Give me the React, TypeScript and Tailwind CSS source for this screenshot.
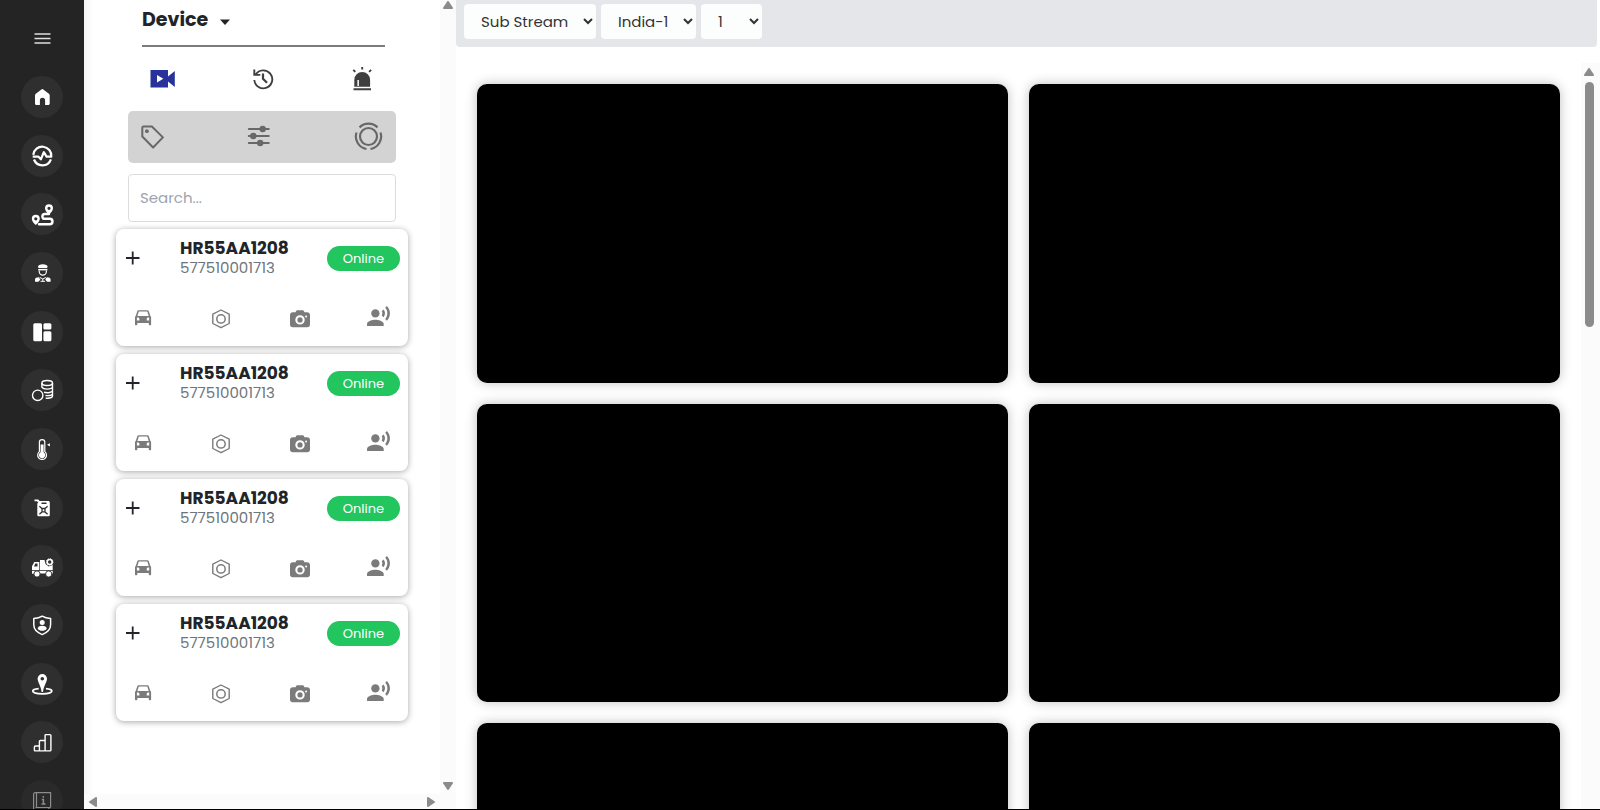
import type { ReactNode } from "react";
import { MdRecordVoiceOver } from "react-icons/md";

type IconProps = { children: ReactNode; className?: string };

function Icon({ children, className = "size-6" }: IconProps) {
  return (
    <svg viewBox="0 0 24 24" fill="none" stroke="currentColor" className={className} aria-hidden="true">
      {children}
    </svg>
  );
}

const navItems: { label: string; icon: ReactNode; muted?: boolean }[] = [
  {
    label: "Home",
    icon: (
      <path
        fill="currentColor"
        stroke="none"
        d="M11.4 4.5a1.5 1.5 0 0 1 1.9 0l5.6 4.2c.5.4.8 1 .8 1.6v8.2c0 .9-.6 1.5-1.5 1.5h-3.1v-4.6a2.6 2.6 0 0 0-5.2 0V20H6.500c-.9 0-1.500-.6-1.500-1.500v-8.200c0-.6.3-1.200.8-1.600z"
      />
    ),
  },
  {
    label: "Activity",
    icon: (
      <g strokeWidth="2.200" strokeLinejoin="round">
        <path d="M3.300 10.800A9 9 0 0 1 21.300 12.700H16.600L13.800 8.200 10.900 15.300 8.500 12.700H2.700" />
        <path d="M4 15.500A9 9 0 0 0 20.900 15.300" />
      </g>
    ),
  },
  {
    label: "Routes",
    icon: (
      <g>
        <path strokeWidth="2.400" strokeLinecap="round" d="M19 12h-4.200a2.400 2.400 0 0 0 0 4.800h5a2.700 2.700 0 0 1 0 5.400H9" />
        <path
          fill="currentColor"
          stroke="none"
          fillRule="evenodd"
          d="M19 2.200a4 4 0 0 1 4 4c0 2.600-2.200 4.600-4 6.400-1.800-1.800-4-3.800-4-6.400a4 4 0 0 1 4-4zm0 2.500a1.600 1.600 0 1 0 0 3.200 1.600 1.600 0 0 0 0-3.200zM5.800 12.700a4 4 0 0 1 4 4c0 2.600-2.200 4.600-4 6.300-1.800-1.700-4-3.700-4-6.300a4 4 0 0 1 4-4zm0 2.500a1.600 1.600 0 1 0 0 3.200 1.600 1.600 0 0 0 0-3.200z"
        />
      </g>
    ),
  },
  {
    label: "Drivers",
    icon: (
      <g>
        <path fill="currentColor" stroke="none" d="M8 5.800c0-1.600 2-2.600 4.800-2.600s4.800 1 4.800 2.600l-.6 1.300H8.600z" />
        <path fill="currentColor" stroke="none" d="M8.200 7.900h9.200v1.500H8.200z" />
        <path strokeWidth="1.200" d="M9.200 9.500v1a3.600 3.600 0 0 0 7.200 0v-1" />
        <path
          fill="currentColor"
          stroke="none"
          d="M5 20.800v-2.200c0-1.600 1.500-2.200 3.700-2.300l1.700 2.200-1.900 2.300zM20.600 20.800v-2.200c0-1.600-1.500-2.200-3.700-2.300l-1.700 2.200 1.900 2.300z"
        />
        <path strokeWidth="1" d="m9.700 16.400 3.100 1.600 3.100-1.600M12.800 18v2.300M10.500 20.300h4.600" />
      </g>
    ),
  },
  {
    label: "Dashboard",
    icon: (
      <g fill="currentColor" stroke="none">
        <rect x="3.300" y="3.300" width="8.700" height="18" rx="1.500" />
        <rect x="13.400" y="3.300" width="8" height="6.200" rx="1.500" />
        <rect x="13.400" y="11.200" width="8" height="10.100" rx="1.500" />
      </g>
    ),
  },
  {
    label: "Costs",
    icon: (
      <g strokeWidth="1.400">
        <circle cx="7.700" cy="17.300" r="5.200" />
        <ellipse cx="17.200" cy="5" rx="5.300" ry="2.500" />
        <path d="M11.900 5v4.200c.8 1.200 2.700 1.900 5.300 1.900s5-.9 5.300-2.200M22.500 5v13c-.3 1.300-2.200 2.200-4.800 2.300h-2M14 14.300c3.500.9 8.200.3 8.500-1.700M15.500 17.500c3.500.3 6.700-.4 7-1.900" />
      </g>
    ),
  },
  {
    label: "Temperature",
    icon: (
      <g>
        <path strokeWidth="1.200" d="M9.400 5.300a2.700 2.700 0 0 1 5.400 0v9.300a4.400 4.400 0 1 1-5.400 0z" />
        <path fill="currentColor" stroke="none" d="M10.600 7.500h3v7.700a3.200 3.200 0 1 1-3 0zM17 7.800l2.900-1.600v3.200z" />
      </g>
    ),
  },
  {
    label: "Fuel",
    icon: (
      <g>
        <path
          fill="currentColor"
          stroke="none"
          fillRule="evenodd"
          d="M4.500 3.500h3.800l1.400 1.500h8.500c1 0 1.600.7 1.600 1.600v12.100c0 1-.7 1.600-1.600 1.600H8.900c-1 0-1.600-.7-1.600-1.600V8.300c0-.9.3-1.500.9-2.100L7 5.200H4.500zM11.500 6.600v1.500h5V6.600z"
        />
        <path stroke="#2f2f2f" strokeWidth="1.300" d="m9.400 10.300 2.600 2.200h3l2.600-2.200M9.400 18.200l2.600-2.300h3l2.600 2.300M12 12.500v3.400M15 12.500v3.400" />
      </g>
    ),
  },
  {
    label: "Fleet",
    icon: (
      <g>
        <path fill="currentColor" stroke="none" fillRule="evenodd" d="M2 19.500v-7.200L4.300 8h5v11.500zM4 12.500h3.500V9.400H5.300z" />
        <path fill="currentColor" stroke="none" d="M10 6h4.500l1 4 3.200 2.600 4-1.600v8.500H2v-2.700h8z" />
        <circle cx="19.700" cy="8" r="2.500" strokeWidth="1.600" />
        <circle cx="19.700" cy="8" r="3.300" strokeWidth=".8" strokeDasharray="1.200 1" />
        <path stroke="#2f2f2f" strokeWidth=".8" d="M2 16.500h21" />
        <circle cx="7" cy="20" r="3.100" fill="currentColor" stroke="#2f2f2f" strokeWidth=".9" />
        <circle cx="18.700" cy="20" r="3.100" fill="currentColor" stroke="#2f2f2f" strokeWidth=".9" />
      </g>
    ),
  },
  {
    label: "Security",
    icon: (
      <g>
        <path strokeWidth="1.500" strokeLinejoin="round" d="M12.200 3.200C14.500 4.700 17.500 5.400 20.600 5.500v6.300c0 4.600-3.300 7.800-8.400 9.800-5.100-2-8.400-5.200-8.400-9.800V5.500c3.100-.1 6.100-.8 8.400-2.300z" />
        <circle cx="12.200" cy="9.500" r="2.500" fill="currentColor" stroke="none" />
        <path fill="currentColor" stroke="none" d="M7.700 15.800c0-2.100 1.900-3 4.500-3s4.500.9 4.500 3c-1 1.500-2.600 2-4.500 2s-3.500-.5-4.500-2z" />
      </g>
    ),
  },
  {
    label: "Locations",
    icon: (
      <g>
        <path
          fill="currentColor"
          stroke="none"
          fillRule="evenodd"
          d="M12.300 2a4.700 4.700 0 0 1 4.700 4.700c0 3.300-3.300 7-4 13.300h-1.400C10.900 13.700 7.600 10 7.600 6.700A4.700 4.700 0 0 1 12.300 2zm0 3a1.800 1.800 0 1 0 0 3.600 1.800 1.800 0 0 0 0-3.600z"
        />
        <path strokeWidth="1.600" d="M8.700 16.600c-3.400.3-6 1.200-6 2.500 0 1.600 4.300 2.800 9.600 2.800s9.600-1.200 9.600-2.800c0-1.300-2.600-2.200-6-2.500" />
      </g>
    ),
  },
  {
    label: "Reports",
    icon: (
      <path
        strokeWidth="1.400"
        strokeLinejoin="round"
        d="M4.400 16.900c0-.6.300-.9.900-.9h4.100v4.900H5.300c-.6 0-.9-.3-.9-.9zM9.400 11.400c0-.6.300-.9.900-.9h4.800v10.400H9.400zM15.100 5.500c0-.6.300-.9.900-.9h4c.6 0 .9.300.9.900V20c0 .6-.3.900-.9.900h-4.900z"
      />
    ),
  },
  {
    label: "Manual",
    muted: true,
    icon: (
      <g strokeWidth="1.200">
        <path d="M20.600 18.500V3.700H5.500c-1.200 0-1.900.8-1.900 2V20c0 1.200.8 2 1.900 2h15.100M20.600 18.500H5.500M6.500 3.700v14.800M19 18.500V22" />
        <path strokeWidth="1.500" d="M13.300 7v1.700M11.800 10.500h1.600v4.300M11.500 15h4" />
      </g>
    ),
  },
];

function Sidebar() {
  return (
    <nav aria-label="Main" className="w-[84px] shrink-0 overflow-hidden bg-[#242424] text-white">
      <button aria-label="Toggle menu" className="flex h-[76px] w-full items-center justify-center">
        <Icon>
          <path strokeWidth="1.700" stroke="#dedede" d="M4.500 8h16M4.500 12.500h16M4.500 17h16" />
        </Icon>
      </button>
      <ul className="flex h-[746px] flex-col items-center justify-between">
        {navItems.map((item) => (
          <li key={item.label}>
            <a
              href="#"
              aria-label={item.label}
              className={
                item.muted
                  ? "flex size-[42px] items-center justify-center rounded-full bg-[#2a2a2a] text-[#8c8c8c]"
                  : "flex size-[42px] items-center justify-center rounded-full bg-[#2f2f2f]"
              }
            >
              <Icon>{item.icon}</Icon>
            </a>
          </li>
        ))}
      </ul>
    </nav>
  );
}

function Arrow({ direction }: { direction: "up" | "down" | "left" | "right" }) {
  const turn = { up: "", down: "rotate-180", left: "-rotate-90", right: "rotate-90" }[direction];
  return (
    <svg viewBox="0 0 10 8" className={`shrink-0 ${turn}`} width="10" height="8" aria-hidden="true">
      <path fill="#8b8b8b" d="M4.200.5a1 1 0 0 1 1.600 0L9.800 6.500c.4.700.1 1.500-.7 1.500H.9C.1 8-.2 7.200.2 6.500z" />
    </svg>
  );
}

const devices = [1, 2, 3, 4].map((id) => ({ id, name: "HR55AA1208", serial: "577510001713", status: "Online" }));

function DeviceCard({ name, serial, status }: { name: string; serial: string; status: string }) {
  return (
    <li className="flex h-[117px] flex-col justify-between rounded-lg bg-white px-2 pt-2 pb-[14px] shadow-[0_1px_6px_rgba(0,0,0,0.35)]">
      <div className="flex items-center">
        <button aria-label="Expand" className="flex w-14 items-center pt-0.5">
          <svg viewBox="0 0 16 16" className="size-4" fill="none" stroke="#212529" aria-hidden="true">
            <path strokeWidth="1.800" d="M2 8h13.500M8.700 1.500v13" />
          </svg>
        </button>
        <div className="flex-1">
          <h2 className="text-[17px] leading-[22px] font-bold text-[#212529]">{name}</h2>
          <p className="text-[15px] leading-[18px] text-[#6c757d]">{serial}</p>
        </div>
        <span className="mt-[3px] w-[73px] rounded-full bg-[#22c55e] text-center text-[13px] leading-[25px] text-white">
          {status}
        </span>
      </div>
      <div className="flex items-center justify-between pr-[9px] pl-[7px] text-[#7b7b7b]">
        <button aria-label="Vehicle">
          <Icon>
            <path
              fill="currentColor"
              stroke="none"
              fillRule="evenodd"
              d="M6.300 5.200C6.500 4.500 7 4.200 7.600 4.200h8.900c.6 0 1.100.3 1.300 1l1.400 4.300.9 1.500v7.500c0 .4-.3.700-.7.700h-.9c-.4 0-.7-.3-.7-.7v-1.500H6.300v1.500c0 .4-.3.700-.7.700h-.9c-.4 0-.7-.3-.7-.7V11l.9-1.500zM7.800 5.400 6.400 9.900h11.300l-1.400-4.500zM5.900 11.600v2.800h2.500v-1.300c0-.9-.6-1.500-1.400-1.500zM18.200 11.600v2.800h-2.500v-1.300c0-.9.6-1.500 1.400-1.500z"
            />
          </Icon>
        </button>
        <button aria-label="Settings">
          <Icon>
            <path strokeWidth="1.400" strokeLinejoin="round" d="M12 4 20.200 8.200v9.300L12 21.700l-8.200-4.200V8.200z" />
            <circle cx="12" cy="12.900" r="4.200" strokeWidth="1.500" />
          </Icon>
        </button>
        <button aria-label="Snapshot">
          <Icon>
            <path
              fill="currentColor"
              stroke="none"
              fillRule="evenodd"
              d="M9.200 4.200h5.600c.5 0 .9.300 1.100.8l.6 1.300h2.700c1.700 0 2.800 1.100 2.800 2.800v9.400c0 1.700-1.100 2.800-2.800 2.800H4.800C3.100 21.300 2 20.200 2 18.500V9.100c0-1.700 1.100-2.800 2.800-2.800h2.700l.6-1.300c.2-.5.600-.8 1.100-.8zM12 9.200a4.700 4.700 0 1 0 0 9.400 4.700 4.700 0 0 0 0-9.400zm0 2.100a2.600 2.600 0 1 1 0 5.200 2.600 2.600 0 0 1 0-5.200zm6.100-1.900a1 1 0 1 0 0 2 1 1 0 0 0 0-2z"
            />
          </Icon>
        </button>
        <button aria-label="Talk" className="pb-[3px]">
          <MdRecordVoiceOver className="size-[25px]" />
        </button>
      </div>
    </li>
  );
}

function DevicePanel() {
  return (
    <aside className="grid w-[372px] shrink-0 grid-cols-[1fr_16px] grid-rows-[minmax(0,1fr)_15px] bg-[linear-gradient(to_right,#f5f5f5,#ffffff_10px)]">
      <div className="overflow-hidden px-8">
        <div className="px-3">
          <button className="mx-[14px] flex h-[47px] w-[calc(100%-25px)] items-center gap-3 border-b-2 border-[#7c7c7c] pb-[5px] text-left text-[19px] font-bold text-[#212529]">
            Device
            <svg viewBox="0 0 10 6" width="10" height="6" className="mt-1" aria-hidden="true">
              <path fill="currentColor" d="M0 .5h10L5 6z" />
            </svg>
          </button>
          <div className="flex h-16 items-center justify-between pr-[22px] pl-[21px] text-[#3f3f3f]">
            <button aria-label="Live video" className="text-[#28329a]">
              <svg viewBox="0 0 26 20" className="h-5 w-[26px]" aria-hidden="true">
                <path fill="currentColor" fillRule="evenodd" d="M1.500 1H19v6.500L25.800 2v16L19 12.500V18.500H1.500zm6.500 5v7.500L14.300 9.800z" />
              </svg>
            </button>
            <button aria-label="History">
              <Icon>
                <path strokeWidth="1.900" d="M4.700 7.500A9 9 0 1 1 3.300 13M3.300 2.500v5.400h6" />
                <path strokeWidth="2.200" d="M12 6.500v5.400l4 3.800" />
              </Icon>
            </button>
            <button aria-label="Alarms">
              <Icon>
                <path fill="currentColor" stroke="none" fillRule="evenodd" d="M4.300 19.700v-6.800a7.900 7.900 0 0 1 15.800 0v6.800zM7.400 18.900h1.500v-6H7.400z" />
                <path strokeWidth="1.900" d="M3.500 22.300h17.500M12.200 0v2.600M3.300 2.800l2 2M21.100 2.800l-2 2" />
              </Icon>
            </button>
          </div>
          <div className="flex h-[52px] items-center justify-between rounded-[5px] bg-[#d3d3d3] px-3 text-[#686868]">
            <button aria-label="Tags">
              <Icon>
                <path strokeWidth="2" strokeLinejoin="round" d="M2.300 2.800c0-.8.500-1.300 1.300-1.300h8.300L22.900 12.400 13.100 22.500 2.300 11.500z" />
                <circle cx="6.900" cy="6.200" r="1.900" fill="currentColor" stroke="none" />
              </Icon>
            </button>
            <button aria-label="Filters">
              <Icon>
                <path strokeWidth="1.900" strokeLinecap="round" d="M1.800 4h20M1.800 11h20M1.800 18h20" />
                <g fill="currentColor" stroke="none">
                  <circle cx="15.700" cy="4" r="3.200" />
                  <circle cx="6.300" cy="11" r="3.200" />
                  <circle cx="13.200" cy="18" r="3.200" />
                </g>
              </Icon>
            </button>
            <button aria-label="Status">
              <svg viewBox="0 0 30 30" className="size-[30px]" fill="none" stroke="currentColor" aria-hidden="true">
                <circle cx="14.500" cy="14.500" r="8.500" strokeWidth="2.200" />
                <path strokeWidth="2.200" d="M5.500 5.400a12.700 12.700 0 0 1 18 0M2.500 10.500a12.700 12.700 0 0 0 10 16.500M26.500 10.500a12.700 12.700 0 0 1-10 16.500" />
              </svg>
            </button>
          </div>
          <input
            type="search"
            aria-label="Search devices"
            placeholder="Search..."
            className="mt-[11px] h-12 w-full rounded-[4px] border border-[#dcdcdc] bg-white px-[11px] pb-0.5 text-[15px] text-[#212529] placeholder:text-[#9ca3af]"
          />
        </div>
        <ul className="mt-[7px] flex flex-col gap-2">
          {devices.map((device) => (
            <DeviceCard key={device.id} name={device.name} serial={device.serial} status={device.status} />
          ))}
        </ul>
      </div>
      <div className="flex flex-col items-center justify-between bg-[#fbfbfb] pt-px pb-1">
        <Arrow direction="up" />
        <Arrow direction="down" />
      </div>
      <div className="flex items-center justify-between bg-[#fbfbfb] px-1">
        <Arrow direction="left" />
        <Arrow direction="right" />
      </div>
      <div className="bg-[#fbfbfb]" />
    </aside>
  );
}

function LiveView() {
  const selectStyle = "h-[35px] rounded-[4px] bg-[#fcfefd] pl-[13px] text-[15px] text-[#333]";
  return (
    <main className="flex min-w-0 flex-1 flex-col">
      <header className="mr-[3px] flex h-[47px] shrink-0 gap-[5px] rounded-b-[4px] bg-[#e5e6ea] px-2 pt-1">
        <select aria-label="Stream" className={`${selectStyle} w-[132px]`}>
          <option>Sub Stream</option>
        </select>
        <select aria-label="Server" className={`${selectStyle} w-[95px]`}>
          <option>India-1</option>
        </select>
        <select aria-label="Channel" className={`${selectStyle} w-[61px]`}>
          <option>1</option>
        </select>
      </header>
      <div className="mt-4 flex min-h-0 flex-1">
        <section
          aria-label="Video channels"
          className="grid min-w-0 flex-1 grid-cols-2 content-start gap-[21px] overflow-hidden px-[21px] pt-[21px]"
        >
          {[1, 2, 3, 4, 5, 6].map((channel) => (
            <div key={channel} className="aspect-video rounded-[10px] bg-black shadow-[0_0_12px_rgba(0,0,0,0.25)]" />
          ))}
        </section>
        <div className="flex w-[19px] flex-col items-center bg-[#fbfbfb] pt-[5px] pr-[3px]">
          <Arrow direction="up" />
          <div className="mt-[6px] h-[33%] w-[9px] rounded-full bg-[#8b8b8b]" />
        </div>
      </div>
    </main>
  );
}

export default function App() {
  return (
    <div className="flex h-screen overflow-hidden border-b border-black bg-white font-[Poppins,Inter,sans-serif]">
      <Sidebar />
      <DevicePanel />
      <LiveView />
    </div>
  );
}
